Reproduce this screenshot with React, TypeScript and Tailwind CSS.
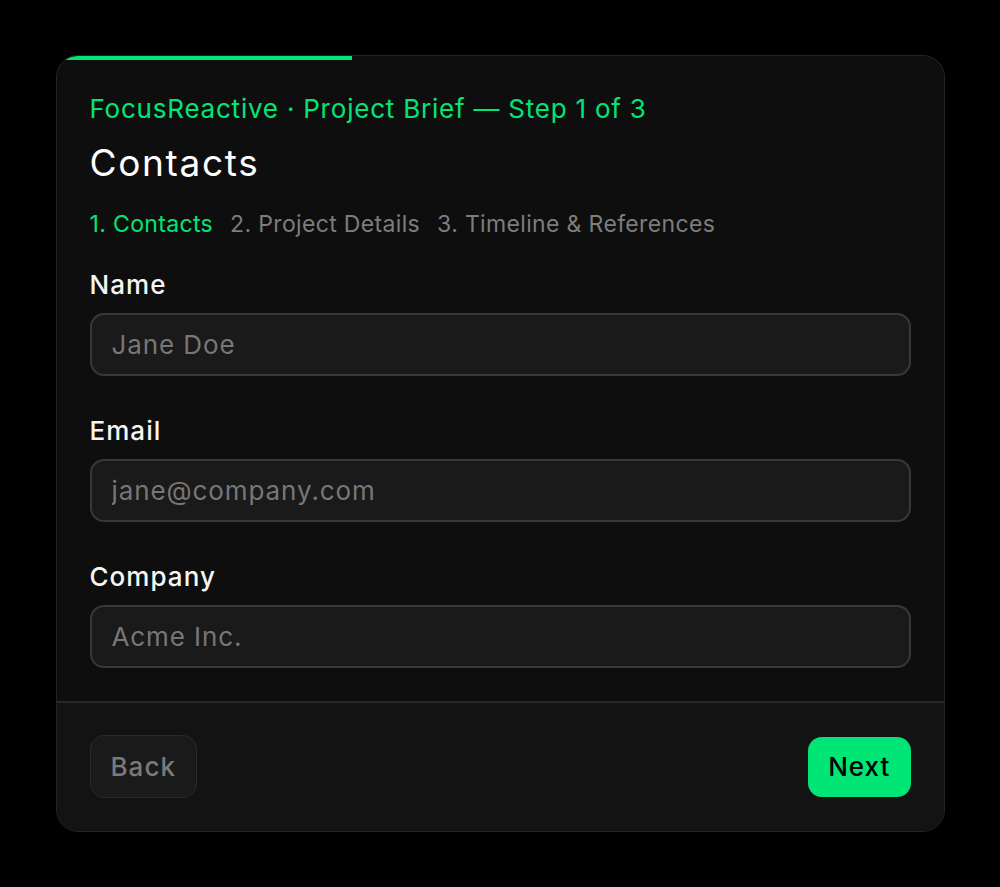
import { useState } from 'react'

const steps = ['1. Contacts', '2. Project Details', '3. Timeline & References']

const fields = [
  { label: 'Name', placeholder: 'Jane Doe', type: 'text' },
  { label: 'Email', placeholder: 'jane@company.com', type: 'email' },
  { label: 'Company', placeholder: 'Acme Inc.', type: 'text' },
]

export default function App() {
  const [step] = useState(0)

  return (
    <div
      className="min-h-screen w-full bg-black flex items-center justify-center tracking-[0.035em]"
      style={{ fontFamily: 'Inter, "Noto Sans", sans-serif' }}
    >
      <div className="w-[889px] rounded-[22px] border border-[#242424] bg-[#0e0e0e] overflow-hidden">
        <div className="h-[4px] w-full">
          <div className="h-full w-1/3 bg-[#00e676]" />
        </div>

        <div className="px-[33px] pt-[33px] pb-[33px]">
          <p className="text-[26px] leading-[32px] tracking-[0.03em] text-[#00e676]">
            FocusReactive · Project Brief — Step 1 of 3
          </p>
          <h1 className="mt-[16px] text-[37px] leading-[44px] font-normal tracking-[0.045em] text-white">
            Contacts
          </h1>

          <div className="mt-[24px] flex gap-[17px] text-[23px] leading-[30px] tracking-[0.015em]">
            {steps.map((s, i) => (
              <span key={s} className={i === step ? 'text-[#00e676]' : 'text-[#7d7d7d]'}>
                {s}
              </span>
            ))}
          </div>

          <div className="mt-[30px] flex flex-col gap-[39px]">
            {fields.map((f) => (
              <label key={f.label} className="flex flex-col gap-[12px]">
                <span className="text-[26px] leading-[32px] font-medium tracking-[0.04em] text-[#f5f5f5]">
                  {f.label}
                </span>
                <input
                  type={f.type}
                  placeholder={f.placeholder}
                  className="h-[63px] rounded-[14px] border-2 border-[#383838] bg-[#1a1a1a] px-[20px] text-[26px] tracking-[0.035em] text-white placeholder:text-[#777777] outline-none"
                />
              </label>
            ))}
          </div>
        </div>

        <div className="border-t-2 border-[#2a2a2a] bg-[#131313] px-[33px] pt-[32px] pb-[33px] flex items-center justify-between">
          <button
            type="button"
            className="h-[63px] px-[20px] rounded-[14px] border border-[#2a2a2a] bg-[#1a1a1a] text-[26px] font-medium tracking-[0.04em] text-[#7a7a7a]"
          >
            Back
          </button>
          <button
            type="button"
            className="h-[60px] px-[20px] rounded-[14px] bg-[#00e676] text-[26px] font-medium tracking-[0.04em] text-black"
          >
            Next
          </button>
        </div>
      </div>
    </div>
  )
}
